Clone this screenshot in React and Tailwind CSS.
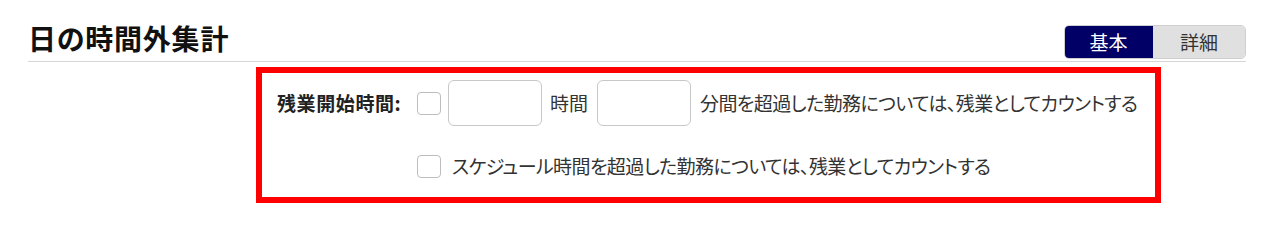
export default function App() {
  const font = { fontFamily: '"Noto Sans CJK JP", "Noto Sans", sans-serif' };
  return (
    <div className="w-[1280px] h-[213px] bg-white pl-[28px] pr-[34px] [font-feature-settings:'palt'] whitespace-nowrap" style={font}>
      <div className="flex justify-between items-end h-[62px] border-b border-[#d6d6d6]">
        <h1 className="mb-[6px] text-[28px] leading-[34px] font-bold text-[#111] tracking-[0.8px]">日の時間外集計</h1>
        <div className="mb-[2px] flex h-[34px] rounded-[5px] overflow-hidden border border-[#cfcfcf]">
          <button className="w-[89px] -my-px -ml-px bg-[#000066] text-white text-[19px] leading-[34px]">基本</button>
          <button className="w-[92px] bg-[#e0e0e0] text-[#333] text-[19px] leading-[32px]">詳細</button>
        </div>
      </div>
      <div className="ml-[228px] mt-[5px] w-[905px] border-[6px] border-[#ff0000] pl-[15px] pt-[7px] pb-[19px]">
        <div className="flex items-center h-[46px] text-[19px] tracking-[-0.6px] text-[#333]">
          <span className="shrink-0 w-[129px] font-bold text-[#222] text-[19px] tracking-[0.6px]">残業開始時間:</span>
          <span className="shrink-0 ml-[11px] w-[24px] h-[23px] rounded-[4px] border border-[#bdbdbd] bg-white"></span>
          <span className="shrink-0 ml-[7px] w-[94px] h-[46px] rounded-[6px] border border-[#c8c8c8] bg-white"></span>
          <span className="shrink-0 ml-[8px] w-[39px] tracking-[0px]">時間</span>
          <span className="shrink-0 ml-[8px] w-[94px] h-[46px] rounded-[6px] border border-[#c8c8c8] bg-white"></span>
          <span className="shrink-0 ml-[9px]">分間を超過した勤務については、残業としてカウントする</span>
        </div>
        <div className="flex items-center h-[24px] mt-[28px] text-[19px] tracking-[-0.6px] text-[#333] pl-[140px]">
          <span className="shrink-0 w-[24px] h-[23px] rounded-[4px] border border-[#bdbdbd] bg-white"></span>
          <span className="shrink-0 ml-[11px]">スケジュール時間を超過した勤務については、残業としてカウントする</span>
        </div>
      </div>
    </div>
  );
}
